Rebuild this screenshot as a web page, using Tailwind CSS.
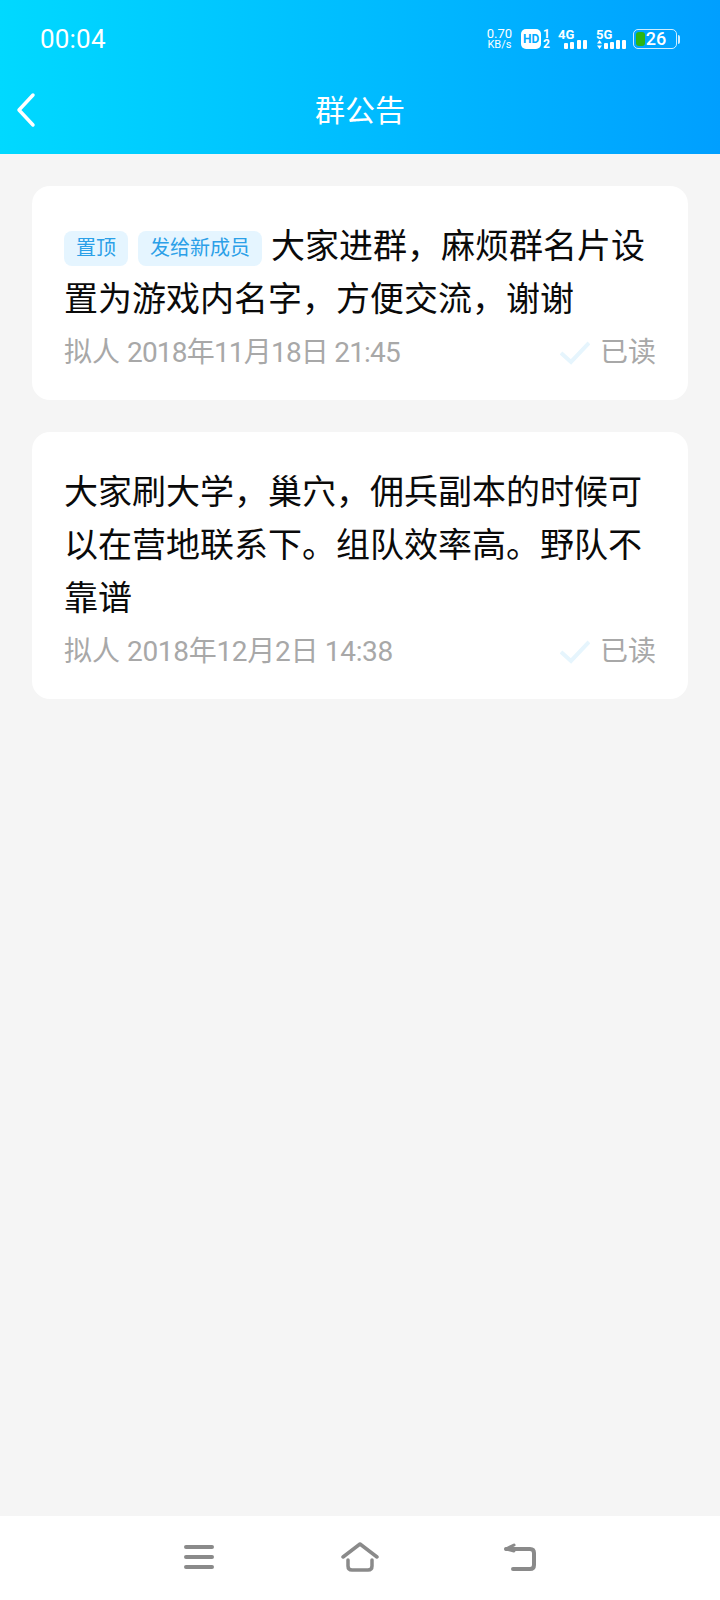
<!DOCTYPE html>
<html lang="zh-CN">
<head>
    <meta charset="UTF-8">
    <meta name="viewport" content="width=device-width, initial-scale=1.0">
    <title>群公告</title>
    <script src="https://cdn.jsdelivr.net/npm/@tailwindcss/browser@4"></script>
</head>
<body class="bg-[#f5f5f5] font-['Roboto','Noto_Sans_CJK_SC',sans-serif]">
    <div class="w-[720px] h-[1600px] flex flex-col overflow-hidden">
        <!-- Header -->
        <div class="h-[154px] shrink-0 bg-gradient-to-r from-[#00d9ff] to-[#009fff] text-white">
            <!-- Status bar -->
            <div class="h-[78px] flex items-center pl-[40px] pr-[40px]">
                <span class="text-[26px] leading-none tracking-[0.2px]">00:04</span>
                <div class="ml-auto flex items-center">
                    <div class="flex flex-col items-center leading-none mr-[9px]">
                        <span class="text-[13px] leading-[12px]">0.70</span>
                        <span class="text-[11px] leading-[10px]">KB/s</span>
                    </div>
                    <div class="flex items-center mr-[8px]">
                        <div class="w-[20px] h-[20px] rounded-[5px] bg-white text-[#00aaff] text-[12px] leading-none font-bold flex items-center justify-center">HD</div>
                        <div class="flex flex-col text-[12px] font-bold leading-[10px] ml-[2px]">
                            <span>1</span>
                            <span>2</span>
                        </div>
                    </div>
                    <div class="flex flex-col mr-[8px]">
                        <span class="text-[13px] font-bold leading-[11px]">4G</span>
                        <svg width="30" height="9" viewBox="0 0 30 9" fill="#fff">
                            <rect x="6" y="3" width="4" height="6" rx="1"/>
                            <rect x="12" y="2" width="4" height="7" rx="1"/>
                            <rect x="19" y="0" width="4" height="9" rx="1"/>
                            <rect x="25" y="0" width="4" height="9" rx="1"/>
                        </svg>
                    </div>
                    <div class="flex flex-col mr-[7px]">
                        <span class="text-[13px] font-bold leading-[11px]">5G</span>
                        <svg width="30" height="9" viewBox="0 0 30 9" fill="#fff">
                            <path d="M1 3.5 L3.5 0 L6 3.5Z M1 5.5 L6 5.5 L3.5 9Z"/>
                            <rect x="8" y="3" width="4" height="6" rx="1"/>
                            <rect x="14" y="2" width="4" height="7" rx="1"/>
                            <rect x="20" y="0" width="4" height="9" rx="1"/>
                            <rect x="26" y="0" width="4" height="9" rx="1"/>
                        </svg>
                    </div>
                    <!-- Battery -->
                    <div class="flex items-center">
                        <div class="relative w-[44px] h-[20px] rounded-[5px] border border-white/80 flex items-center justify-center">
                            <div class="absolute left-[2px] top-[2px] bottom-[2px] w-[9px] rounded-[3px] bg-[#2bb514]"></div>
                            <span class="relative text-[18px] font-medium leading-none ml-[2px]">26</span>
                        </div>
                        <div class="w-[2px] h-[9px] bg-white/80 rounded-r-[2px] ml-[1px]"></div>
                    </div>
                </div>
            </div>
            <!-- Title bar -->
            <div class="relative h-[76px] flex items-center justify-center pb-[10px]">
                <svg class="absolute left-[16px] top-[14px]" width="20" height="36" viewBox="0 0 20 36" fill="none" stroke="#fff" stroke-width="3.5" stroke-linecap="round" stroke-linejoin="round">
                    <path d="M17 3 L3 18 L17 33"/>
                </svg>
                <span class="text-[30px] leading-none">群公告</span>
            </div>
        </div>

        <!-- Notices -->
        <div class="flex-1 px-[32px] pt-[32px] flex flex-col gap-[32px]">
            <div class="bg-white rounded-[18px] pl-[32px] pr-[32px] pt-[34px] pb-[21px]">
                <p class="text-[34px] leading-[53px] text-[#0a0a0a]">
                    <span class="inline-block align-[3px] h-[35px] px-[12px] mr-[10px] rounded-[8px] bg-[#e5f5ff] text-[#2ba0e8] text-[20px] leading-[35px]">置顶</span><span class="inline-block align-[3px] h-[35px] px-[12px] mr-[9px] rounded-[8px] bg-[#e5f5ff] text-[#2ba0e8] text-[20px] leading-[35px]">发给新成员</span>大家进群&#65292;麻烦群名片设置为游戏内名字&#65292;方便交流&#65292;谢谢
                </p>
                <div class="flex items-center h-[53px] text-[28px] text-[#a8a8a8]">
                    <span>拟人 <span class="tracking-[-0.8px]">2018年11月18日 21:45</span></span>
                    <svg class="ml-auto mr-[10px]" width="30" height="24" viewBox="0 0 30 24" fill="none" stroke="#e6f5fd" stroke-width="4">
                        <path d="M1 12 L11 21 L29 2"/>
                    </svg>
                    <span>已读</span>
                </div>
            </div>

            <div class="bg-white rounded-[18px] pl-[32px] pr-[32px] pt-[34px] pb-[21px]">
                <p class="text-[34px] leading-[53px] text-[#0a0a0a]">大家刷大学&#65292;巢穴&#65292;佣兵副本的时候可以在营地联系下&#12290;组队效率高&#12290;野队不靠谱</p>
                <div class="flex items-center h-[53px] text-[28px] text-[#a8a8a8]">
                    <span>拟人 <span class="tracking-[-0.3px]">2018年12月2日 14:38</span></span>
                    <svg class="ml-auto mr-[10px]" width="30" height="24" viewBox="0 0 30 24" fill="none" stroke="#e6f5fd" stroke-width="4">
                        <path d="M1 12 L11 21 L29 2"/>
                    </svg>
                    <span>已读</span>
                </div>
            </div>
        </div>

        <!-- Bottom navigation -->
        <div class="h-[84px] shrink-0 bg-white flex items-center justify-center gap-[125px] pb-[2px]">
            <svg width="30" height="24" viewBox="0 0 30 24" fill="none" stroke="#8a8a8a" stroke-width="4" stroke-linecap="round">
                <path d="M2 2 H28 M2 12 H28 M2 22 H28"/>
            </svg>
            <svg class="ml-[2px]" width="38" height="30" viewBox="0 0 38 30" fill="none" stroke="#8a8a8a" stroke-width="3.5" stroke-linecap="round" stroke-linejoin="round">
                <path d="M2 15 L19 2 L36 15"/>
                <path d="M7 18 V24 Q7 28 11 28 H27 Q31 28 31 24 V18"/>
            </svg>
            <svg width="32" height="28" viewBox="0 0 32 28" fill="none" stroke="#8a8a8a" stroke-width="4" stroke-linecap="round" stroke-linejoin="round">
                <path d="M2 6 H26 Q30 6 30 10 V22 Q30 26 26 26 H9"/>
                <path d="M10 2 L2 6 L10 8" stroke-width="3"/>
            </svg>
        </div>
    </div>
</body>
</html>
